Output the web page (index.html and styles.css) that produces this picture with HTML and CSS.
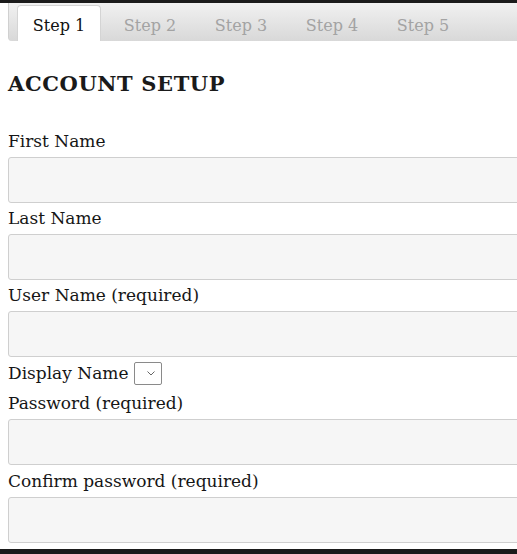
FILE: index.html
```html
<!DOCTYPE html>
<html>
<head>
<meta charset="utf-8">
<link rel="stylesheet" href="styles.css">
</head>
<body>
<div class="page">
  <ul class="tabs">
    <li class="tab active">Step 1</li>
    <li class="tab">Step 2</li>
    <li class="tab">Step 3</li>
    <li class="tab">Step 4</li>
    <li class="tab">Step 5</li>
  </ul>
  <h2 class="title">ACCOUNT SETUP</h2>
  <form class="form">
    <label class="label">First Name</label>
    <input class="field" type="text">
    <label class="label">Last Name</label>
    <input class="field" type="text">
    <label class="label">User Name (required)</label>
    <input class="field" type="text">
    <div class="display-row">
      <span class="display-label">Display Name</span>
      <span class="select"><svg width="8" height="5" viewBox="0 0 8 5"><path d="M0.5 0.5 L4 4 L7.5 0.5" fill="none" stroke="#666" stroke-width="1"/></svg></span>
    </div>
    <label class="label">Password (required)</label>
    <input class="field" type="password">
    <label class="label label-last">Confirm password (required)</label>
    <input class="field" type="password">
  </form>
</div>
</body>
</html>
```
FILE: styles.css
```css
html, body {
  margin: 0;
  padding: 0;
  background: #1b1b1b;
}
.page {
  margin-top: 3px;
  height: 546px;
  background: #fff;
  overflow: hidden;
  padding-left: 8px;
  font-family: "DejaVu Serif", "Liberation Serif", serif;
  color: #161616;
}
.tabs {
  list-style: none;
  margin: 0;
  padding: 2px 0 0 8px;
  height: 36px;
  width: 560px;
  display: flex;
  gap: 7px;
  background: linear-gradient(#f1f1f1, #d8d8d8);
  border-bottom-left-radius: 4px;
  border-left: 1px solid #d0d0d0;
  box-sizing: content-box;
}
.tab {
  width: 84px;
  height: 36px;
  box-sizing: border-box;
  text-align: center;
  font-size: 16px;
  padding-top: 3px;
  line-height: 36px;
  color: #a3a3a3;
}
.tab.active {
  background: #fff;
  color: #111;
  border: 1px solid #d4d4d4;
  border-bottom: none;
  border-radius: 4px 4px 0 0;
  padding-top: 2px;
  line-height: 35px;
}
.title {
  margin: 30px 0 0 0;
  font-size: 21px;
  line-height: 26px;
  letter-spacing: 0.6px;
  font-weight: bold;
  color: #1a1a1a;
}
.form {
  display: flex;
  flex-direction: column;
  align-items: flex-start;
  margin-top: 31px;
}
.label {
  font-size: 17px;
  line-height: 26px;
  margin-bottom: 3px;
}
.label-last {
  margin-top: 1px;
}
.field {
  display: block;
  width: 600px;
  height: 46px;
  box-sizing: border-box;
  margin: 0 0 2px 0;
  border: 1px solid #cfcfcf;
  border-radius: 3px;
  background: #f6f6f6;
}
.display-row {
  display: flex;
  align-items: center;
  gap: 6px;
  height: 28px;
  margin-bottom: 3px;
  font-size: 17px;
}
.select {
  width: 28px;
  height: 23px;
  box-sizing: border-box;
  border: 1px solid #8a8a8a;
  border-radius: 2px;
  display: flex;
  align-items: center;
  justify-content: flex-end;
  padding-right: 6px;
  background: #fff;
}
```
